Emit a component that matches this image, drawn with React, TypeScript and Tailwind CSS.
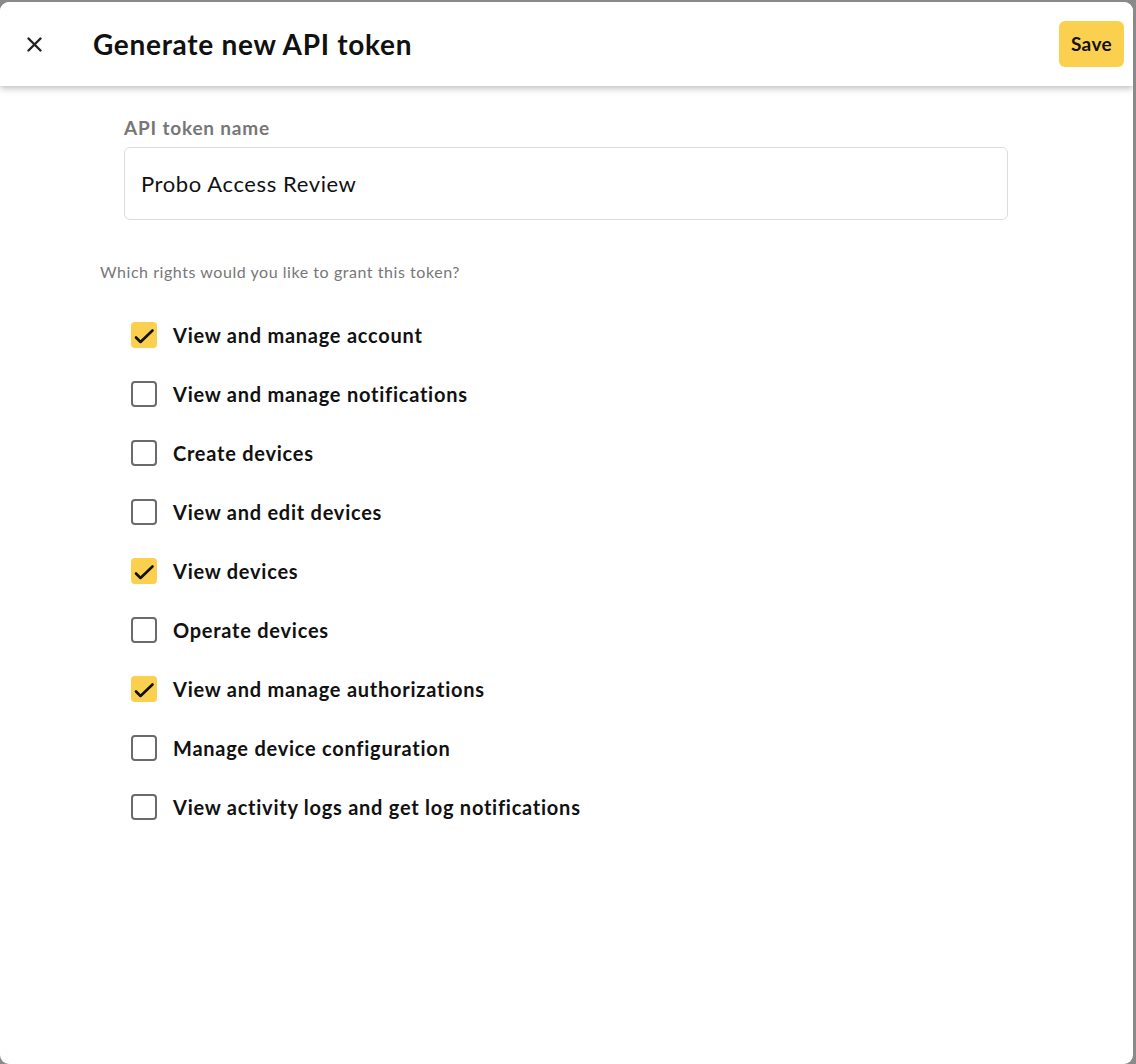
import React from "react";

const items: { label: string; checked: boolean }[] = [
  { label: "View and manage account", checked: true },
  { label: "View and manage notifications", checked: false },
  { label: "Create devices", checked: false },
  { label: "View and edit devices", checked: false },
  { label: "View devices", checked: true },
  { label: "Operate devices", checked: false },
  { label: "View and manage authorizations", checked: true },
  { label: "Manage device configuration", checked: false },
  { label: "View activity logs and get log notifications", checked: false },
];

function Check({ checked }: { checked: boolean }) {
  if (checked) {
    return (
      <span className="flex h-[26px] w-[26px] shrink-0 items-center justify-center rounded-[4px] bg-[#fbd04f]">
        <svg width="26" height="26" viewBox="0 0 26 26" fill="none" stroke="#111" strokeWidth="2.6" strokeLinecap="round" strokeLinejoin="round">
          <path d="M5 15.5l4.5 4.5L21.5 8.5" />
        </svg>
      </span>
    );
  }
  return <span className="h-[26px] w-[26px] shrink-0 rounded-[4px] border-2 border-[#6b6b6b] bg-white" />;
}

export default function App() {
  return (
    <div className="h-[1064px] w-[1136px] overflow-hidden bg-[#8a8a8a] pt-[2px]" style={{ fontFamily: "Lato, 'Noto Sans', sans-serif" }}>
      <div className="flex h-[1062px] w-[1133px] flex-col overflow-hidden rounded-[9px] bg-white">
        <header className="relative z-10 flex h-[84px] shrink-0 items-center bg-white pl-[27px] pr-[9px] shadow-[0_2px_7px_rgba(0,0,0,0.28)]">
          <svg width="15" height="15" viewBox="0 0 15 15" fill="none" stroke="#222" strokeWidth="2.4" strokeLinecap="round">
            <path d="M1.5 1.5l12 12M13.5 1.5l-12 12" />
          </svg>
          <h1 className="ml-[51px] text-[28px] font-bold tracking-[0.7px] text-[#111]">Generate new API token</h1>
          <button className="ml-auto h-[46px] w-[65px] rounded-[6px] bg-[#fbd04f] text-[19px] font-bold tracking-[0.4px] text-[#111]">Save</button>
        </header>
        <main className="flex flex-col pt-[31px]">
          <div className="pl-[124px]">
            <label className="block text-[19px] font-bold leading-[22px] tracking-[0.8px] text-[#777]">API token name</label>
            <div className="mt-[8px] flex h-[73px] w-[884px] items-center rounded-[6px] border border-[#dcdcdc] pl-[16px] text-[22px] tracking-[0.6px] text-[#111]">
              Probo Access Review
            </div>
          </div>
          <p className="mt-[42px] pl-[100px] text-[16px] leading-[20px] tracking-[0.55px] text-[#777]">Which rights would you like to grant this token?</p>
          <ul className="mt-[40px] flex flex-col gap-[33px] pl-[131px]">
            {items.map((it) => (
              <li key={it.label} className="flex h-[26px] items-center gap-[16px]">
                <Check checked={it.checked} />
                <span className="text-[20px] font-bold leading-[26px] tracking-[0.75px] text-[#111]">{it.label}</span>
              </li>
            ))}
          </ul>
        </main>
      </div>
    </div>
  );
}
